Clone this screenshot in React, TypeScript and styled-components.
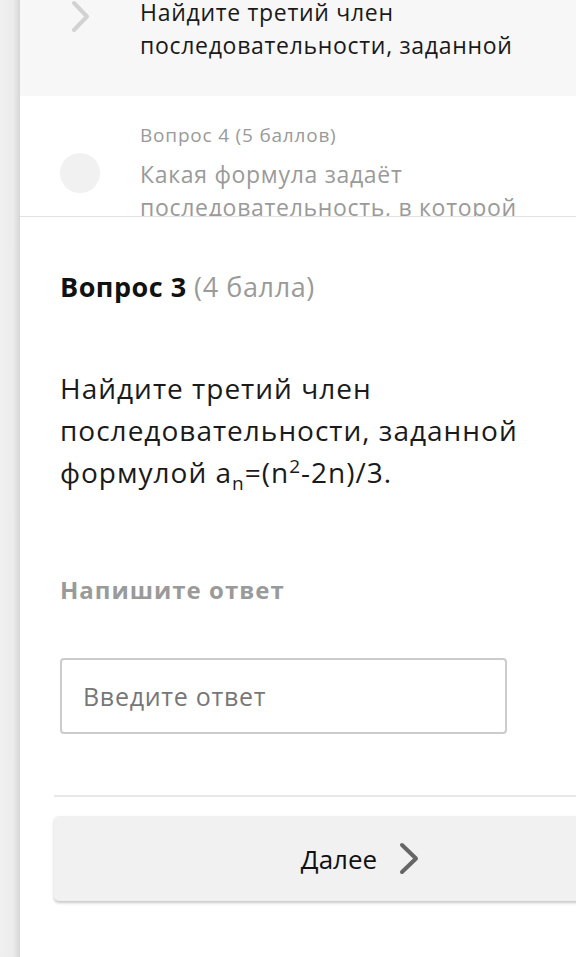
import styled, { createGlobalStyle } from "styled-components";

const GlobalStyle = createGlobalStyle`
  html, body {
    margin: 0;
    padding: 0;
    background: #ffffff;
    overflow: hidden;
  }
  body {
    font-family: "Open Sans", "Noto Sans", sans-serif;
    color: #1a1a1a;
  }
`;

type ListItem = {
  label: string;
  text: string;
  active?: boolean;
};

const items: ListItem[] = [
  {
    label: "Вопрос 3 (4 балла)",
    text: "Найдите третий член последовательности, заданной",
    active: true,
  },
  {
    label: "Вопрос 4 (5 баллов)",
    text: "Какая формула задаёт последовательность, в которой",
  },
];

const Chevron = ({ color, width, height }: { color: string; width: number; height: number }) => (
  <svg width={width} height={height} viewBox={`0 0 ${width} ${height}`} fill="none">
    <polyline
      points={`3,3 ${width - 3},${height / 2} 3,${height - 3}`}
      stroke={color}
      strokeWidth={4}
      strokeLinecap="round"
      strokeLinejoin="round"
    />
  </svg>
);

export default function App() {
  return (
    <>
      <GlobalStyle />
      <Page>
        <SideStrip />
        <Main>
          <QuestionList>
            <QuestionListInner>
              {items.map((item) => (
                <QuestionItem key={item.label} $active={item.active}>
                  <ItemIcon $active={item.active}>
                    {item.active ? (
                      <Chevron color="#d2d2d2" width={19} height={33} />
                    ) : (
                      <Dot />
                    )}
                  </ItemIcon>
                  <ItemBody>
                    <ItemLabel>{item.label}</ItemLabel>
                    <ItemText $active={item.active}>{item.text}</ItemText>
                  </ItemBody>
                </QuestionItem>
              ))}
            </QuestionListInner>
          </QuestionList>

          <Question>
            <QuestionTitle>
              Вопрос 3 <Points>(4 балла)</Points>
            </QuestionTitle>
            <QuestionText>
              Найдите третий член последовательности, заданной формулой a
              <sub>n</sub>=(n<sup>2</sup>-2n)/3.
            </QuestionText>
            <AnswerLabel>Напишите ответ</AnswerLabel>
            <AnswerInput placeholder="Введите ответ" />
          </Question>

          <Footer>
            <NextButton>
              Далее
              <Chevron color="#666666" width={20} height={33} />
            </NextButton>
          </Footer>
        </Main>
      </Page>
    </>
  );
}

const Page = styled.div`
  display: flex;
  min-height: 957px;
  width: 700px;
`;

const SideStrip = styled.div`
  flex: 0 0 20px;
  background: linear-gradient(to right, #f0f0f0 0%, #ececec 65%, #d6d6d6 100%);
`;

const Main = styled.div`
  flex: 1;
  display: flex;
  flex-direction: column;
  background: #ffffff;
`;

const QuestionList = styled.div`
  height: 216px;
  overflow: hidden;
  border-bottom: 1px solid #e2e2e2;
`;

const QuestionListInner = styled.div`
  display: flex;
  flex-direction: column;
  margin-top: -66px;
`;

const QuestionItem = styled.div<{ $active?: boolean }>`
  display: flex;
  align-items: center;
  gap: 40px;
  padding: 26px 40px 34px 40px;
  background: ${(p) => (p.$active ? "#f7f7f7" : "#ffffff")};
`;

const ItemIcon = styled.div<{ $active?: boolean }>`
  flex: 0 0 40px;
  display: flex;
  justify-content: center;
  align-items: center;
  margin-top: ${(p) => (p.$active ? "10px" : "0")};
`;

const Dot = styled.div`
  width: 40px;
  height: 40px;
  border-radius: 50%;
  background: #f1f1f1;
`;

const ItemBody = styled.div`
  display: flex;
  flex-direction: column;
  gap: 10px;
  width: 400px;
`;

const ItemLabel = styled.div`
  font-size: 19px;
  line-height: 26px;
  letter-spacing: 0.8px;
  color: #9a9a9a;
`;

const ItemText = styled.div<{ $active?: boolean }>`
  font-size: 23px;
  line-height: 33px;
  letter-spacing: 0.7px;
  color: ${(p) => (p.$active ? "#1a1a1a" : "#9a9a9a")};
`;

const Question = styled.div`
  display: flex;
  flex-direction: column;
  padding: 52px 40px 0 40px;
`;

const QuestionTitle = styled.div`
  font-size: 27px;
  line-height: 36px;
  font-weight: 700;
  color: #111111;
  letter-spacing: 0.5px;
`;

const Points = styled.span`
  font-weight: 400;
  color: #9a9a9a;
  letter-spacing: 0.6px;
`;

const QuestionText = styled.p`
  margin: 62px 0 0 0;
  width: 480px;
  font-size: 28px;
  line-height: 42px;
  letter-spacing: 1px;
  color: #1a1a1a;

  sub,
  sup {
    font-size: 19px;
    line-height: 0;
  }
`;

const AnswerLabel = styled.div`
  margin-top: 81px;
  font-size: 24px;
  line-height: 32px;
  font-weight: 700;
  letter-spacing: 1px;
  color: #9a9a9a;
`;

const AnswerInput = styled.input`
  margin-top: 52px;
  box-sizing: border-box;
  width: 447px;
  height: 76px;
  padding: 0 21px;
  border: 2px solid #cccccc;
  border-radius: 4px;
  font-family: "Open Sans", "Noto Sans", sans-serif;
  font-size: 25px;
  letter-spacing: 0.7px;
  color: #1a1a1a;
  outline: none;

  &::placeholder {
    color: #777777;
  }
`;

const Footer = styled.div`
  margin: 61px 0 0 34px;
  padding-top: 19px;
  border-top: 2px solid #e8e8e8;
`;

const NextButton = styled.button`
  width: 612px;
  height: 85px;
  display: flex;
  justify-content: center;
  align-items: center;
  gap: 22px;
  border: none;
  border-radius: 5px;
  background: #f1f1f1;
  box-shadow: 0 2px 3px rgba(0, 0, 0, 0.22);
  font-family: "Open Sans", "Noto Sans", sans-serif;
  font-size: 26px;
  color: #111111;
  cursor: pointer;
`;
